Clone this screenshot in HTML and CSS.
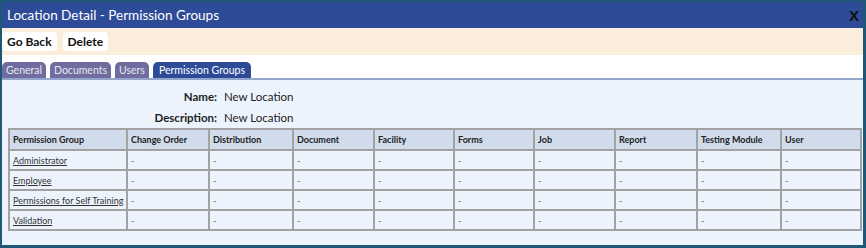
FILE: index.html
```html
<!DOCTYPE html>
<html lang="en">
  <head>
    <meta charset="UTF-8" />
    <title>Location Detail - Permission Groups</title>
    <link rel="stylesheet" href="styles.css">
  </head>
  <body>
    <div class="dialog">
      <div class="titlebar">
        <span>Location Detail - Permission Groups</span>
        <span class="close">X</span>
      </div>
      <div class="toolbar">
        <button class="btn">Go Back</button>
        <button class="btn">Delete</button>
      </div>
      <div class="tabs">
        <a class="tab">General</a>
        <a class="tab">Documents</a>
        <a class="tab">Users</a>
        <a class="tab active">Permission Groups</a>
      </div>
      <div class="content">
        <div class="field">
          <label>Name:</label>
          <span>New Location</span>
        </div>
        <div class="field">
          <label>Description:</label>
          <span>New Location</span>
        </div>
        <table class="grid">
          <colgroup>
            <col style="width:118px"><col style="width:82px"><col style="width:84px"><col style="width:81px"><col style="width:80px">
            <col style="width:80px"><col style="width:81px"><col style="width:82px"><col style="width:84px"><col style="width:80px">
          </colgroup>
          <tr>
            <th>Permission Group</th>
            <th>Change Order</th>
            <th>Distribution</th>
            <th>Document</th>
            <th>Facility</th>
            <th>Forms</th>
            <th>Job</th>
            <th>Report</th>
            <th>Testing Module</th>
            <th>User</th>
          </tr>
          <tr>
            <td><a href="#">Administrator</a></td>
            <td>-</td><td>-</td><td>-</td><td>-</td><td>-</td><td>-</td><td>-</td><td>-</td><td>-</td>
          </tr>
          <tr>
            <td><a href="#">Employee</a></td>
            <td>-</td><td>-</td><td>-</td><td>-</td><td>-</td><td>-</td><td>-</td><td>-</td><td>-</td>
          </tr>
          <tr>
            <td><a href="#">Permissions for Self Training</a></td>
            <td>-</td><td>-</td><td>-</td><td>-</td><td>-</td><td>-</td><td>-</td><td>-</td><td>-</td>
          </tr>
          <tr>
            <td><a href="#">Validation</a></td>
            <td>-</td><td>-</td><td>-</td><td>-</td><td>-</td><td>-</td><td>-</td><td>-</td><td>-</td>
          </tr>
        </table>
      </div>
    </div>
  </body>
</html>
```

FILE: styles.css
```css
body {
  margin: 0;
  padding: 2px 3px 3px 2px;
  background: #1f5877;
  font-family: Lato, sans-serif;
  color: #222;
}
.dialog {
  background: #edf3fd;
  height: 243px;
  display: flex;
  flex-direction: column;
}
.titlebar {
  height: 26px;
  background: #2e4b98;
  color: #fff;
  font-size: 13.5px;
  display: flex;
  align-items: center;
  justify-content: space-between;
  padding: 0 4px 0 5px;
}
.close {
  color: #111;
  font-weight: bold;
  font-size: 15px;
  font-family: "Liberation Sans", sans-serif;
}
.toolbar {
  height: 27px;
  background: #faeddc;
  display: flex;
  align-items: center;
  gap: 6px;
  padding: 0;
}
.btn {
  font-family: Lato, sans-serif;
  font-weight: bold;
  font-size: 12px;
  background: #fff;
  border: none;
  border-radius: 4px;
  padding: 0 5px;
  height: 19px;
  line-height: 18px;
  color: #111;
}
.tabs {
  height: 23px;
  background: #fff;
  display: flex;
  align-items: flex-end;
  gap: 4px;
  border-bottom: 2px solid #95a6cc;
  padding-left: 0;
}
.tab {
  font-size: 10.5px;
  line-height: 16px;
  background: #716c9f;
  color: #e6e6f0;
  padding: 0 4px;
  border-radius: 5px 5px 0 0;
}
.tab.active {
  background: #2e4b98;
  color: #fff;
  padding: 0 6px;
}
.content {
  flex: 1;
  padding: 6px 4px 0 6px;
}
.field {
  display: flex;
  font-size: 11.5px;
  height: 21px;
  align-items: center;
}
.field label {
  width: 209px;
  text-align: right;
  font-weight: bold;
  padding-right: 7px;
}
.grid {
  border-collapse: collapse;
  table-layout: fixed;
  width: 852px;
  font-size: 9px;
}
.grid th,
.grid td {
  border: 2px solid #a2a2a2;
  text-align: left;
  padding: 0 3px;
  height: 18px;
  white-space: nowrap;
}
.grid th {
  background: #d0dbeb;
  font-weight: bold;
  height: 19px;
}
.grid td {
  color: #666;
}
.grid a {
  color: #333;
}
```
